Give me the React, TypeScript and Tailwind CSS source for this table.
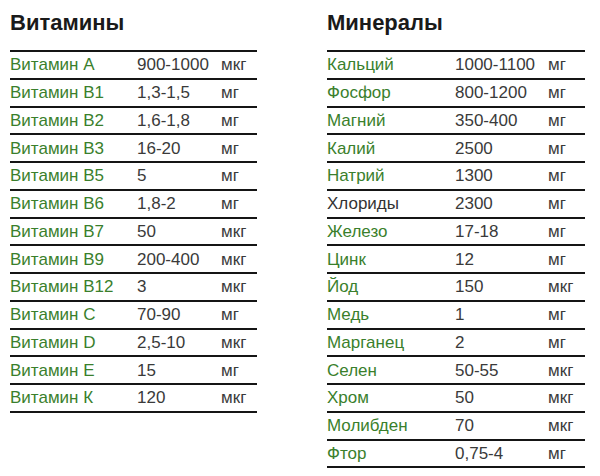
import React from "react";

type Row = [string, string, string, boolean?];

const vitamins: Row[] = [
  ["Витамин А", "900-1000", "мкг"],
  ["Витамин В1", "1,3-1,5", "мг"],
  ["Витамин В2", "1,6-1,8", "мг"],
  ["Витамин В3", "16-20", "мг"],
  ["Витамин В5", "5", "мг"],
  ["Витамин В6", "1,8-2", "мг"],
  ["Витамин В7", "50", "мкг"],
  ["Витамин В9", "200-400", "мкг"],
  ["Витамин В12", "3", "мкг"],
  ["Витамин С", "70-90", "мг"],
  ["Витамин D", "2,5-10", "мкг"],
  ["Витамин Е", "15", "мг"],
  ["Витамин К", "120", "мкг"],
];

const minerals: Row[] = [
  ["Кальций", "1000-1100", "мг"],
  ["Фосфор", "800-1200", "мг"],
  ["Магний", "350-400", "мг"],
  ["Калий", "2500", "мг"],
  ["Натрий", "1300", "мг"],
  ["Хлориды", "2300", "мг", true],
  ["Железо", "17-18", "мг"],
  ["Цинк", "12", "мг"],
  ["Йод", "150", "мкг"],
  ["Медь", "1", "мг"],
  ["Марганец", "2", "мг"],
  ["Селен", "50-55", "мкг"],
  ["Хром", "50", "мкг"],
  ["Молибден", "70", "мкг"],
  ["Фтор", "0,75-4", "мг"],
];

function Table({
  title,
  rows,
  nameW,
  valW,
  unitW,
}: {
  title: string;
  rows: Row[];
  nameW: string;
  valW: string;
  unitW: string;
}) {
  return (
    <div className="flex flex-col">
      <h2 className="pt-[12px] text-[22px] font-bold leading-[22px] text-[#1a1a1a] h-[50px]">
        {title}
      </h2>
      <div className="border-t-2 border-[#151515]">
        {rows.map(([n, v, u, dark]) => (
          <div
            key={n}
            className="flex items-center h-[27.75px] border-b-2 border-[#151515] text-[17px] leading-none"
          >
            <div className={`${nameW} ${dark ? "text-[#333333]" : "text-[#3a7f2c]"}`}>{n}</div>
            <div className={`${valW} text-[#3a3a3a]`}>{v}</div>
            <div className={`${unitW} text-[#3a3a3a]`}>{u}</div>
          </div>
        ))}
      </div>
    </div>
  );
}

export default function App() {
  return (
    <div
      className="w-[600px] h-[476px] bg-white flex pl-[10px] gap-[70px]"
      style={{ fontFamily: '"Liberation Sans", Arial, sans-serif' }}
    >
      <div className="w-[247px]">
        <Table title="Витамины" rows={vitamins} nameW="w-[127px]" valW="w-[84px]" unitW="w-[36px]" />
      </div>
      <div className="w-[258px]">
        <Table title="Минералы" rows={minerals} nameW="w-[128px]" valW="w-[93px]" unitW="w-[37px]" />
      </div>
    </div>
  );
}
